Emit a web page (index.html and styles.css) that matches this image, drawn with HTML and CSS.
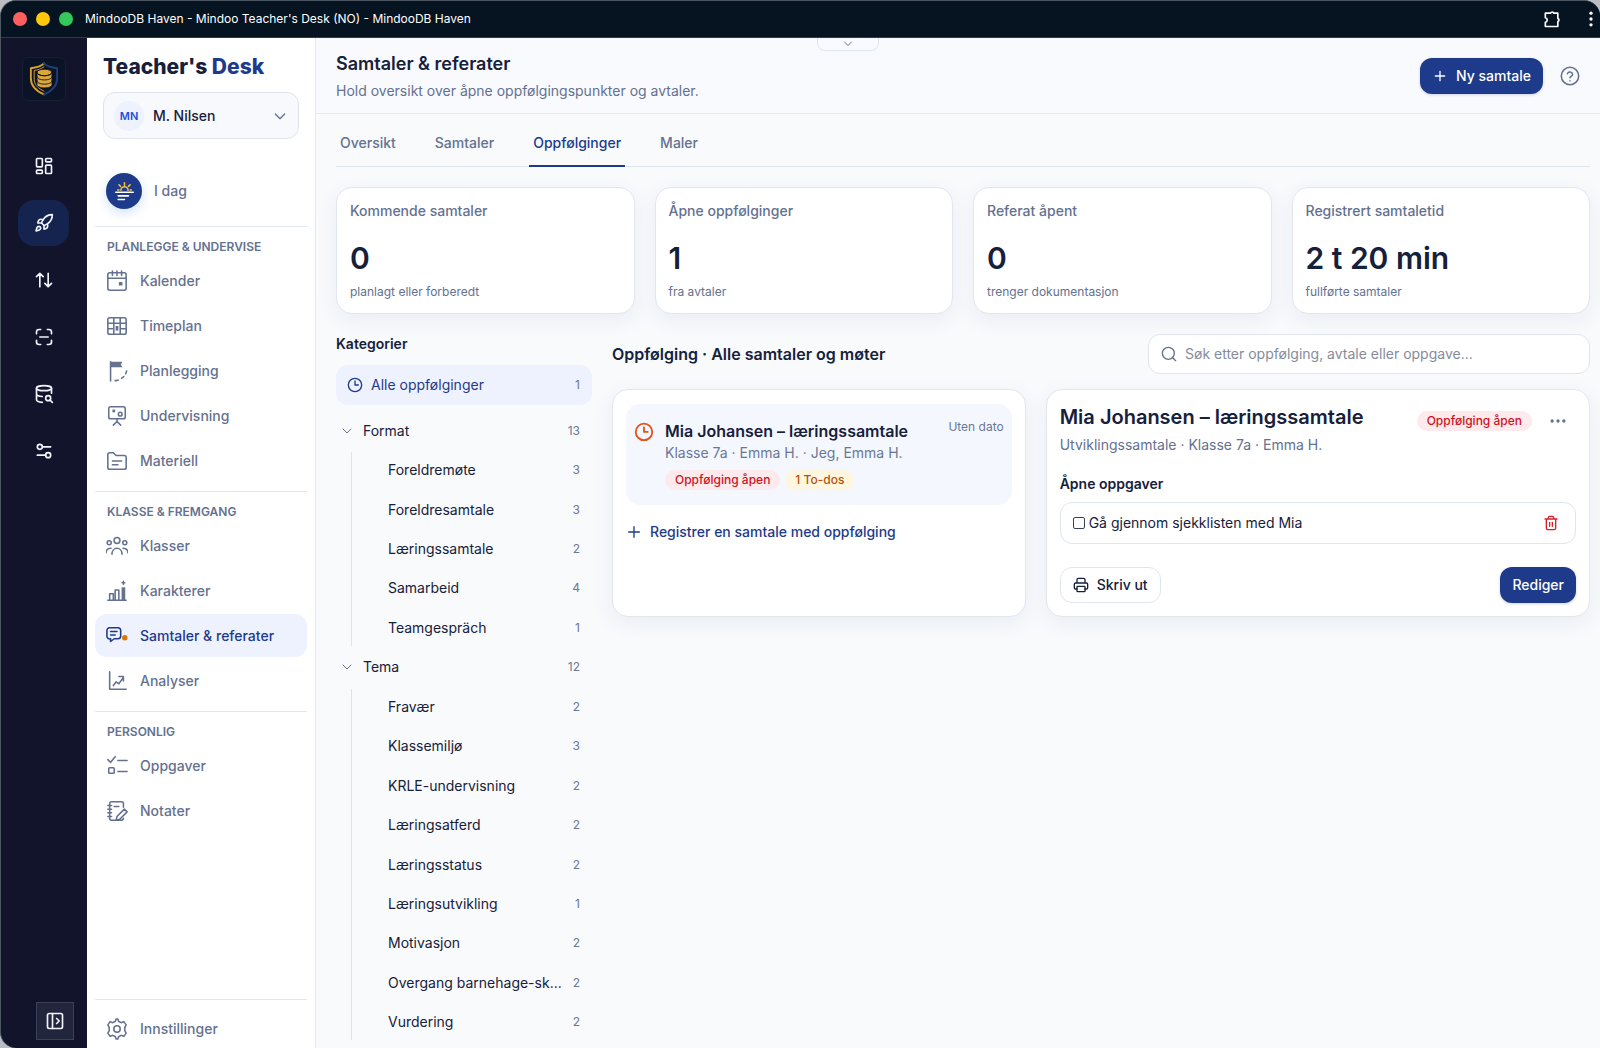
FILE: index.html
```
<!DOCTYPE html>
<html lang="no">
<head>
	<title>Mindoo Teacher's Desk</title>
	<meta charset="utf-8">
	<meta name="viewport" content="width=device-width, initial-scale=1">
	<link rel="stylesheet" href="styles.css">
</head>
<body>
<div class="window">
	<header class="titlebar">
		<span class="light red"></span>
		<span class="light yellow"></span>
		<span class="light green"></span>
		<span class="titlebar-text">MindooDB Haven - Mindoo Teacher's Desk (NO) - MindooDB Haven</span>
		<button class="titlebar-btn" aria-label="Utvidelser">
			<svg class="icon20" viewBox="0 0 24 24"><path d="M4 5h6.500a1.800 1.800 0 0 1 3.500 0h5v6.500a1.800 1.800 0 0 1 0 3.500v6H4v-5a2.800 2.800 0 0 0 0-5.500z"/></svg>
		</button>
		<button class="titlebar-btn" aria-label="Meny">
			<svg class="icon20 solid" viewBox="0 0 24 24"><circle cx="12" cy="5" r="2"/><circle cx="12" cy="12" r="2"/><circle cx="12" cy="19" r="2"/></svg>
		</button>
	</header>

	<div class="app">
		<nav class="rail" aria-label="Apper">
			<div class="rail-logo">
				<svg viewBox="0 0 32 36">
					<path class="gold" d="M16 1.500C12 5 7 6 2 6.500v11C2 26 8 31 16 34.500"/>
					<path class="blue" d="M16 1.500c4 3.500 9 4.500 14 5v11C30 26 24 31 16 34.500"/>
					<path class="gold thin" d="M16 5C12.500 7.500 9 8.500 5.500 9v9c0 6 4 10 10.500 13"/>
					<path class="gold-fill" d="M8.500 11v13c0 2 3.500 3.500 8 3.500s8-1.500 8-3.500V11z"/>
					<ellipse class="gold-fill" cx="16.500" cy="11" rx="8" ry="3.500"/>
					<path class="cut" d="M8.500 11c0 2 3.500 3.500 8 3.500s8-1.500 8-3.500M8.500 15.500c0 2 3.500 3.500 8 3.500s8-1.500 8-3.500M8.500 20c0 2 3.500 3.500 8 3.500s8-1.500 8-3.500"/>
				</svg>
			</div>
			<div class="rail-items">
				<button class="rail-btn" aria-label="Dashbord">
					<svg class="icon20" viewBox="0 0 24 24"><rect x="3" y="3" width="7" height="10" rx="1"/><rect x="3" y="17" width="7" height="4" rx="1"/><rect x="14" y="3" width="7" height="4" rx="1"/><rect x="14" y="11" width="7" height="10" rx="1"/></svg>
				</button>
				<button class="rail-btn active" aria-label="Apper">
					<svg class="icon20" viewBox="0 0 24 24"><path d="M12 15l-3-3a22 22 0 0 1 2-4A13 13 0 0 1 22 2c0 2.700-.8 7.500-6 11a22 22 0 0 1-4 2z"/><path d="M9 12H4.500s.5-3 2-4 4.500 0 4.500 0M12 15v4.500s3-.5 4-2 0-4.500 0-4.500"/><path d="M4.500 16.500c-1.500 1.300-2 5-2 5s3.700-.5 5-2c.7-.8.700-2.100-.1-2.900a2.200 2.200 0 0 0-2.900-.1z"/></svg>
				</button>
				<button class="rail-btn" aria-label="Synkronisering">
					<svg class="icon20" viewBox="0 0 24 24"><path d="M7 20V4M3 8l4-4 4 4M17 4v16M13 16l4 4 4-4"/></svg>
				</button>
				<button class="rail-btn" aria-label="Skann">
					<svg class="icon20" viewBox="0 0 24 24"><path d="M3 8V6a3 3 0 0 1 3-3h2M16 3h2a3 3 0 0 1 3 3v2M21 16v2a3 3 0 0 1-3 3h-2M8 21H6a3 3 0 0 1-3-3v-2M7 12h10"/></svg>
				</button>
				<button class="rail-btn" aria-label="Databasesøk">
					<svg class="icon20" viewBox="0 0 24 24"><ellipse cx="12" cy="5" rx="9" ry="3"/><path d="M3 5v14c0 1.500 3 2.800 7 3M21 5v6M3 12c0 1.500 3 2.700 7 3"/><circle cx="17" cy="17" r="3"/><path d="M22 22l-2.800-2.800"/></svg>
				</button>
				<button class="rail-btn" aria-label="Justeringer">
					<svg class="icon20" viewBox="0 0 24 24"><circle cx="7" cy="7" r="3"/><path d="M10 7h10"/><circle cx="17" cy="17" r="3"/><path d="M14 17H4"/></svg>
				</button>
			</div>
			<button class="rail-toggle" aria-label="Vis sidepanel">
				<svg class="icon20" viewBox="0 0 24 24"><rect x="3" y="3" width="18" height="18" rx="2"/><path d="M9 3v18M14 9l3 3-3 3"/></svg>
			</button>
		</nav>

		<aside class="sidebar">
			<div class="brand">Teacher's <span>Desk</span></div>
			<div class="user">
				<label class="avatar" for="user">MN</label>
				<select id="user"><option>M. Nilsen</option></select>
				<svg class="icon16 user-chevron" viewBox="0 0 24 24"><path d="M5 9l7 7 7-7"/></svg>
			</div>
			<a class="today" href="#">
				<span class="today-icon">
					<svg viewBox="0 0 24 24"><path class="sun" d="M7.500 10.500a4.500 4.500 0 0 1 9 0M12 4V1M7 5.500L5 3.500M17 5.500l2-2M5 10H3.500M19 10h1.500"/><path d="M1 13h22M4 17.500h13M4 22h8"/></svg>
				</span>
				I dag
			</a>

			<div class="nav-group">
				<h2>PLANLEGGE &amp; UNDERVISE</h2>
				<a href="#"><svg class="icon22" viewBox="0 0 24 24"><rect x="2" y="3" width="20" height="19" rx="2"/><path d="M2 9h20M7 1v5M12 1v5M17 1v5"/><rect class="dot" x="14" y="13" width="4" height="4" rx="1"/></svg>Kalender</a>
				<a href="#"><svg class="icon22" viewBox="0 0 24 24"><rect x="2" y="3" width="20" height="18" rx="2"/><path d="M2 9h20M8.500 3v18M15.500 3v18M2 15h6.500M15.500 15H22"/><rect class="dot" x="10.500" y="12" width="3" height="5"/></svg>Timeplan</a>
				<a href="#"><svg class="icon22" viewBox="0 0 24 24"><path d="M5 2v21"/><path class="dot" d="M5 2h13l-2 3 2 3H5z"/><path d="M22.500 12l-1 3M19.500 18l-2.500 2M13.500 22l-3.500.5"/></svg>Planlegging</a>
				<a href="#"><svg class="icon22" viewBox="0 0 24 24"><rect x="3" y="2" width="18" height="13" rx="2"/><path d="M12 15v3M8 22l4-4 4 4"/><circle cx="15.500" cy="10" r="2"/><rect class="dot" x="7" y="5" width="3" height="3"/></svg>Undervisning</a>
				<a href="#"><svg class="icon22" viewBox="0 0 24 24"><path d="M4 3h4l3 3h9a2 2 0 0 1 2 2v11a2 2 0 0 1-2 2H4a2 2 0 0 1-2-2V5a2 2 0 0 1 2-2zM7 12h10M7 16h6"/></svg>Materiell</a>
			</div>
			<div class="nav-group">
				<h2>KLASSE &amp; FREMGANG</h2>
				<a href="#"><svg class="icon22" viewBox="0 0 24 24"><circle cx="12" cy="6" r="3.200"/><circle cx="3.500" cy="8.500" r="2.200"/><circle cx="20.500" cy="8.500" r="2.200"/><path d="M6.500 21c0-4 2.500-6.500 5.500-6.500s5.500 2.500 5.500 6.500M0 19.500c0-3 2-5 5.500-5M24 19.500c0-3-2-5-5.500-5"/></svg>Klasser</a>
				<a href="#"><svg class="icon22" viewBox="0 0 24 24"><path d="M2 22h20M4 22v-7h4v7M10 22V11h4v11"/><path class="dot" d="M17 8h4v14h-4z"/><path d="M19 1.500v3M17.500 3h3"/></svg>Karakterer</a>
				<a class="active" href="#"><svg class="icon22" viewBox="0 0 24 24"><path d="M4 3h9a3 3 0 0 1 3 3v6a3 3 0 0 1-3 3H9l-4 3v-3a3 3 0 0 1-4-3V6a3 3 0 0 1 3-3zM5 7h7M5 11h5"/><circle class="orange" cx="20.500" cy="14" r="3"/></svg>Samtaler &amp; referater</a>
				<a href="#"><svg class="icon22" viewBox="0 0 24 24"><path d="M4 2v19h18M8 17l3-4 3 2 5-7M14 7h5v5"/></svg>Analyser</a>
			</div>
			<div class="nav-group">
				<h2>PERSONLIG</h2>
				<a href="#"><svg class="icon22" viewBox="0 0 24 24"><path d="M2 5l3 3 5-6M13 6h10M13 18h10"/><rect x="3" y="14" width="6" height="6" rx="1"/></svg>Oppgaver</a>
				<a href="#"><svg class="icon22" viewBox="0 0 24 24"><path d="M19 8V4a2 2 0 0 0-2-2H6a2 2 0 0 0-2 2v16a2 2 0 0 0 2 2h11a2 2 0 0 0 2-2M2 6h4M2 10h4M2 14h4M2 18h4M9 7h5M20 10l3 3-8 8-4 1 1-4z"/></svg>Notater</a>
			</div>
			<div class="nav-group nav-bottom">
				<a href="#"><svg class="icon22" viewBox="0 0 24 24"><path d="M10.300 3.600 11 1h2l.7 2.600 2.800 1.500L19.500 4l2.500 3.500-1.500 2.700v3.600L22 16.500 19.500 20l-3-1.100-2.800 1.500L13 23h-2l-.7-2.600-2.800-1.500L4.500 20 2 16.500l1.500-2.700v-3.600L2 7.500 4.500 4l3 1.100z"/><circle cx="12" cy="12" r="3.500"/></svg>Innstillinger</a>
			</div>
		</aside>

		<main class="main">
			<button class="pull-tab" aria-label="Vis toppfelt">
				<svg class="icon12" viewBox="0 0 24 24"><path d="M5 8l7 7 7-7"/></svg>
			</button>
			<header class="page-header">
				<div class="page-title">
					<h1>Samtaler &amp; referater</h1>
					<p>Hold oversikt over åpne oppfølgingspunkter og avtaler.</p>
				</div>
				<button class="btn primary">
					<svg class="icon16" viewBox="0 0 24 24"><path d="M12 5v14M5 12h14"/></svg>Ny samtale
				</button>
				<button class="help" aria-label="Hjelp">
					<svg class="icon22" viewBox="0 0 24 24"><circle cx="12" cy="12" r="9.500"/><path d="M9.200 9.500a2.900 2.900 0 0 1 5.600.8c0 1.900-2.800 2.400-2.800 3.700M12 17.200v.1"/></svg>
				</button>
			</header>

			<div class="content">
				<nav class="tabs">
					<a href="#">Oversikt</a>
					<a href="#">Samtaler</a>
					<a class="active" href="#">Oppfølginger</a>
					<a href="#">Maler</a>
				</nav>

				<section class="stats">
					<div class="card stat"><h3>Kommende samtaler</h3><strong>0</strong><p>planlagt eller forberedt</p></div>
					<div class="card stat"><h3>Åpne oppfølginger</h3><strong>1</strong><p>fra avtaler</p></div>
					<div class="card stat"><h3>Referat åpent</h3><strong>0</strong><p>trenger dokumentasjon</p></div>
					<div class="card stat"><h3>Registrert samtaletid</h3><strong>2 t 20 min</strong><p>fullførte samtaler</p></div>
				</section>

				<div class="columns">
					<section class="categories">
						<h2>Kategorier</h2>
						<button class="cat-all">
							<svg class="icon16" viewBox="0 0 24 24"><circle cx="12" cy="12" r="10"/><path d="M12 6v6h5"/></svg>
							<span>Alle oppfølginger</span><small>1</small>
						</button>
						<div class="cat-list">
							<button class="cat-group"><svg class="icon12" viewBox="0 0 24 24"><path d="M4 8l8 8 8-8"/></svg><span>Format</span><small>13</small></button>
							<div class="cat-children format">
								<button><span>Foreldremøte</span><small>3</small></button>
								<button><span>Foreldresamtale</span><small>3</small></button>
								<button><span>Læringssamtale</span><small>2</small></button>
								<button><span>Samarbeid</span><small>4</small></button>
								<button><span>Teamgespräch</span><small>1</small></button>
							</div>
							<button class="cat-group"><svg class="icon12" viewBox="0 0 24 24"><path d="M4 8l8 8 8-8"/></svg><span>Tema</span><small>12</small></button>
							<div class="cat-children tema">
								<button><span>Fravær</span><small>2</small></button>
								<button><span>Klassemiljø</span><small>3</small></button>
								<button><span>KRLE-undervisning</span><small>2</small></button>
								<button><span>Læringsatferd</span><small>2</small></button>
								<button><span>Læringsstatus</span><small>2</small></button>
								<button><span>Læringsutvikling</span><small>1</small></button>
								<button><span>Motivasjon</span><small>2</small></button>
								<button><span>Overgang barnehage-sk...</span><small>2</small></button>
								<button><span>Vurdering</span><small>2</small></button>
							</div>
						</div>
					</section>

					<section class="followups">
						<div class="list-header">
							<h2>Oppfølging · Alle samtaler og møter</h2>
							<div class="search">
								<svg class="icon16" viewBox="0 0 24 24"><circle cx="11" cy="11" r="9"/><path d="M22 22l-4.500-4.500"/></svg>
								<input type="text" aria-label="Søk" placeholder="Søk etter oppfølging, avtale eller oppgave...">
							</div>
						</div>

						<div class="panels">
							<div class="card list-card">
								<article class="entry">
									<svg class="icon22" viewBox="0 0 24 24"><circle cx="12" cy="13" r="9"/><path d="M12 8v5h4"/></svg>
									<div class="entry-body">
										<h3>Mia Johansen – læringssamtale</h3>
										<p>Klasse 7a · Emma H. · Jeg, Emma H.</p>
										<div class="badges">
											<span class="badge red-badge">Oppfølging åpen</span>
											<span class="badge amber-badge">1 To-dos</span>
										</div>
									</div>
									<time>Uten dato</time>
								</article>
								<button class="add-link">
									<svg class="icon16" viewBox="0 0 24 24"><path d="M12 4v16M4 12h16"/></svg>Registrer en samtale med oppfølging
								</button>
							</div>

							<div class="card detail">
								<div class="detail-header">
									<div class="detail-title">
										<h2>Mia Johansen – læringssamtale</h2>
										<p>Utviklingssamtale · Klasse 7a · Emma H.</p>
									</div>
									<span class="badge red-badge">Oppfølging åpen</span>
									<button class="more" aria-label="Flere valg">
										<svg class="icon20 solid" viewBox="0 0 24 24"><circle cx="5" cy="12" r="2"/><circle cx="12" cy="12" r="2"/><circle cx="19" cy="12" r="2"/></svg>
									</button>
								</div>
								<h3>Åpne oppgaver</h3>
								<div class="task">
									<input type="checkbox" id="task1">
									<label for="task1">Gå gjennom sjekklisten med Mia</label>
									<button class="delete" aria-label="Slett oppgave">
										<svg class="icon16" viewBox="0 0 24 24"><path d="M3 6h18M5 6v14a2 2 0 0 0 2 2h10a2 2 0 0 0 2-2V6M8 6V4a2 2 0 0 1 2-2h4a2 2 0 0 1 2 2v2M10 11v6M14 11v6"/></svg>
									</button>
								</div>
								<div class="detail-actions">
									<button class="btn outline">
										<svg class="icon16" viewBox="0 0 24 24"><path d="M6 9V4a2 2 0 0 1 2-2h8a2 2 0 0 1 2 2v5M6 18H4a2 2 0 0 1-2-2v-5a2 2 0 0 1 2-2h16a2 2 0 0 1 2 2v5a2 2 0 0 1-2 2h-2"/><rect x="6" y="14" width="12" height="8" rx="1"/></svg>Skriv ut
									</button>
									<button class="btn primary">Rediger</button>
								</div>
							</div>
						</div>
					</section>
				</div>
			</div>
		</main>
	</div>
</div>
</body>
</html>
```
FILE: styles.css
```
* {
	box-sizing: border-box;
}
body {
	margin: 0;
	font-family: Inter, "Liberation Sans", sans-serif;
	font-size: 14px;
	line-height: 20px;
	color: #17203a;
	background: #b9bdc2;
}
h1, h2, h3, p {
	margin: 0;
}
button {
	font: inherit;
	color: inherit;
	background: none;
	border: 0;
	padding: 0;
	cursor: pointer;
}
a {
	color: inherit;
	text-decoration: none;
}
small {
	font-size: 12px;
	color: #6b7894;
}
svg {
	display: block;
	flex: none;
	fill: none;
	stroke: currentColor;
	stroke-width: 2;
	stroke-linecap: round;
	stroke-linejoin: round;
}
.solid {
	fill: currentColor;
	stroke: none;
}
.icon12 { width: 12px; height: 12px; }
.icon16 { width: 16px; height: 16px; }
.icon20 { width: 20px; height: 20px; }
.icon22 { width: 22px; height: 22px; }

.window {
	min-height: 100vh;
	display: flex;
	flex-direction: column;
	border-top: 1px solid #4c5562;
	border-left: 1px solid #4c5562;
	border-radius: 16px 16px 0 16px;
	overflow: hidden;
	background: #11142b;
}

/* title bar */
.titlebar {
	height: 37px;
	display: flex;
	align-items: center;
	gap: 9px;
	padding: 0 0 1px 12px;
	background: #061321;
	border-bottom: 1px solid #30394a;
	color: #fff;
	font-size: 12px;
	font-weight: 400;
}
.light {
	width: 14px;
	height: 14px;
	border-radius: 50%;
}
.red { background: #ff5f5f; }
.yellow { background: #fdc70c; }
.green { background: #34c759; }
.titlebar-text {
	flex: 1;
	margin-left: 3px;
}
.titlebar-btn {
	margin-right: 10px;
}
.titlebar-btn:last-child {
	margin-right: -1px;
}

.app {
	flex: 1;
	display: flex;
}

/* left rail */
.rail {
	width: 86px;
	flex: none;
	display: flex;
	flex-direction: column;
	align-items: center;
	padding: 19px 1px 8px 0;
	color: #f1f4fb;
}
.rail-logo {
	width: 44px;
	height: 44px;
	display: flex;
	align-items: center;
	justify-content: center;
	background: #0b1426;
	border: 1px solid #171d33;
	border-radius: 6px;
}
.rail-logo svg {
	width: 30px;
	height: 34px;
}
.gold { stroke: #d9a02c; }
.thin { stroke-width: 1; }
.blue { stroke: #1f3f7c; }
.gold-fill {
	fill: #dba73a;
	stroke: #0b1426;
	stroke-width: 1;
}
.cut {
	stroke: #0b1426;
	stroke-width: 1;
}
.rail-items {
	flex: 1;
	display: flex;
	flex-direction: column;
	gap: 11px;
	margin-top: 42px;
}
.rail-btn {
	width: 51px;
	height: 46px;
	display: flex;
	align-items: center;
	justify-content: center;
	border-radius: 16px;
}
.rail-btn.active {
	background: #14244f;
}
.rail-toggle {
	width: 38px;
	height: 38px;
	display: flex;
	align-items: center;
	justify-content: center;
	align-self: flex-end;
	margin-right: 12px;
	background: #22263c;
	border: 1px solid #3c4056;
}

/* sidebar */
.sidebar {
	width: 229px;
	flex: none;
	display: flex;
	flex-direction: column;
	padding: 14px 8px 0;
	background: #fff;
	border-right: 1px solid #e2e7f0;
	color: #64718f;
	font-weight: 500;
}
.brand {
	padding-left: 8px;
	font-size: 21px;
	line-height: 30px;
	font-weight: 800;
	color: #17203a;
}
.brand span {
	color: #1e3a8a;
}
.user {
	height: 47px;
	display: flex;
	align-items: center;
	margin: 10px 8px 0 8px;
	padding: 0 10px;
	background: #f8f9fc;
	border: 1px solid #dfe4ec;
	border-radius: 12px;
	color: #17203a;
}
.avatar {
	width: 30px;
	height: 30px;
	flex: none;
	border-radius: 50%;
	background: #eef1fe;
	color: #1d4ed8;
	font-size: 11px;
	line-height: 30px;
	font-weight: 600;
	text-align: center;
}
.user select {
	flex: 1;
	min-width: 0;
	padding: 0 0 0 9px;
	appearance: none;
	border: 0;
	background: none;
	font: inherit;
	color: inherit;
}
.user-chevron {
	color: #64718f;
}
.today {
	display: flex;
	align-items: center;
	gap: 12px;
	margin: 34px 0 17px 11px;
}
.today-icon {
	width: 36px;
	height: 36px;
	display: flex;
	align-items: center;
	justify-content: center;
	border-radius: 50%;
	background: #1e3a8a;
	color: #fff;
	box-shadow: 0 4px 12px #cfe2f5;
}
.today-icon svg {
	width: 19px;
	height: 19px;
}
.sun {
	stroke: #f2c14a;
}
.nav-group {
	display: flex;
	flex-direction: column;
	gap: 2px;
	padding: 10px 0 9px;
	border-top: 1px solid #e2e7ee;
}
.nav-group h2 {
	padding-left: 12px;
	font-size: 12px;
	line-height: 20px;
	font-weight: 600;
}
.nav-group a {
	height: 43px;
	display: flex;
	align-items: center;
	gap: 12px;
	padding-left: 11px;
	border-radius: 12px;
}
.nav-group svg {
	stroke-width: 1.7;
}
.nav-group a.active {
	background: #eef2fe;
	color: #1e3a8a;
}
.nav-group .dot {
	fill: currentColor;
	stroke: none;
}
.nav-group .orange {
	fill: #d97706;
	stroke: none;
}
.nav-group.nav-bottom {
	margin-top: auto;
	padding: 9px 0 0;
}
.nav-group.nav-bottom a {
	height: 39px;
}

/* main area */
.main {
	flex: 1;
	min-width: 0;
	position: relative;
	display: flex;
	flex-direction: column;
	background: #f8fafc;
}
.pull-tab {
	position: absolute;
	top: 0;
	left: 39%;
	width: 62px;
	height: 13px;
	display: flex;
	align-items: center;
	justify-content: center;
	border: 1px solid #e0e6ee;
	border-top: 0;
	border-radius: 0 0 8px 8px;
	color: #64718f;
}
.page-header {
	display: flex;
	align-items: center;
	padding: 12px 19px 12px 20px;
	background: #f9fafe;
	border-bottom: 1px solid #e6eaf1;
}
.page-title {
	flex: 1;
}
.page-title h1 {
	font-size: 18px;
	line-height: 28px;
	font-weight: 600;
}
.page-title p {
	margin-top: 3px;
	color: #64718f;
}
.btn {
	height: 36px;
	display: flex;
	align-items: center;
	gap: 8px;
	padding: 0 12px;
	border-radius: 12px;
	font-weight: 500;
}
.primary {
	background: #1e3a8a;
	color: #fff;
	box-shadow: 0 1px 3px #ccd3e4;
}
.outline {
	border: 1px solid #e0e5ed;
	background: #fff;
}
.help {
	margin-left: 16px;
	color: #64718f;
}
.help svg {
	stroke-width: 1.7;
}
.content {
	flex: 1;
	display: flex;
	flex-direction: column;
	padding: 8px 10px 8px 20px;
}
.tabs {
	display: flex;
	gap: 31px;
	border-bottom: 1px solid #dfe5ec;
	font-weight: 500;
	color: #64718f;
}
.tabs a {
	padding: 11px 4px 12px;
	margin-bottom: -1px;
	border-bottom: 2px solid transparent;
}
.tabs .active {
	color: #1e3a8a;
	border-color: #1e3a8a;
}
.card {
	background: #fff;
	border: 1px solid #e2e6ef;
	border-radius: 16px;
	box-shadow: 0 6px 20px #e9ecf3;
}
.stats {
	display: grid;
	grid-template-columns: repeat(4, 1fr);
	gap: 20px;
	margin-top: 20px;
}
.stat {
	padding: 13px 13px 15px;
}
.stat h3 {
	font-weight: 500;
	font-size: 14px;
	color: #64718f;
}
.stat strong {
	display: block;
	margin: 19px 0 10px;
	font-size: 30px;
	line-height: 36px;
	font-weight: 600;
}
.stat p {
	font-size: 12px;
	line-height: 12px;
	color: #64718f;
}

.columns {
	flex: 1;
	display: flex;
	gap: 20px;
	margin-top: 20px;
}
.categories {
	width: 256px;
	flex: none;
	display: flex;
	flex-direction: column;
}
.categories h2 {
	margin-bottom: 11px;
	font-size: 14px;
	line-height: 20px;
	font-weight: 600;
}
.categories button {
	display: flex;
	align-items: center;
	padding-right: 12px;
	text-align: left;
}
.categories span {
	flex: 1;
	min-width: 0;
	overflow: hidden;
	text-overflow: ellipsis;
	white-space: nowrap;
}
.cat-all {
	height: 40px;
	gap: 8px;
	margin-bottom: 8px;
	border-radius: 12px;
	background: #eef2fe;
	color: #1e3a8a;
}
.cat-all svg {
	margin-left: 11px;
}
/* every row shares the remaining height */
.cat-list {
	flex: 1;
	display: grid;
	grid-template-columns: minmax(0, 1fr);
	grid-auto-rows: 1fr;
	row-gap: 4px;
}
.cat-group {
	gap: 10px;
}
.cat-group svg {
	margin-left: 5px;
	color: #64718f;
}
.cat-children {
	display: grid;
	grid-template-columns: minmax(0, 1fr);
	grid-template-rows: subgrid;
	margin-left: 15px;
	padding-left: 36px;
	border-left: 1px solid #dfe4ec;
}
.cat-children button {
	gap: 8px;
}
.format { grid-row: span 5; }
.tema { grid-row: span 9; }

.followups {
	flex: 1;
	min-width: 0;
}
.list-header {
	display: flex;
	align-items: center;
	justify-content: space-between;
}
.list-header h2 {
	font-size: 16px;
	font-weight: 600;
}
.search {
	width: 442px;
	height: 40px;
	display: flex;
	align-items: center;
	gap: 8px;
	padding: 0 12px;
	background: #fff;
	border: 1px solid #e0e5ed;
	border-radius: 12px;
	color: #64718f;
}
.search input {
	flex: 1;
	border: 0;
	padding: 0;
	outline: 0;
	background: none;
	font: inherit;
	color: #17203a;
}
.search input::placeholder {
	color: #858c9c;
}
.panels {
	display: grid;
	grid-template-columns: 19fr 25fr;
	gap: 20px;
	margin-top: 15px;
}
.list-card {
	padding: 14px 13px;
}
.entry {
	display: flex;
	padding: 16px 8px 15px 7px;
	background: #f5f7ff;
	border-radius: 14px;
}
.entry svg {
	color: #e2541b;
}
.entry-body {
	flex: 1;
	margin-left: 10px;
}
.entry h3 {
	font-size: 16px;
	line-height: 22px;
	font-weight: 600;
}
.entry p {
	line-height: 22px;
	color: #6b7894;
}
.entry time {
	font-size: 12px;
	line-height: 14px;
	color: #6b7894;
}
.badges {
	display: flex;
	gap: 5px;
	margin-top: 6px;
}
.badge {
	padding: 0 10px;
	border-radius: 10px;
	font-size: 12px;
	line-height: 20px;
	font-weight: 500;
}
.red-badge {
	background: #fdeaec;
	color: #d11124;
}
.amber-badge {
	background: #fff6e0;
	color: #b45309;
}
.add-link {
	display: flex;
	align-items: center;
	gap: 8px;
	margin-top: 17px;
	color: #1e3a8a;
	font-weight: 500;
}
.detail {
	padding: 13px;
}
.detail-header {
	display: flex;
}
.detail-title {
	flex: 1;
}
.detail-title h2 {
	font-size: 20px;
	line-height: 28px;
	font-weight: 600;
}
.detail-title p {
	margin-top: 4px;
	color: #64718f;
}
.detail-header .badge {
	align-self: flex-start;
	margin-top: 8px;
}
.more {
	align-self: flex-start;
	margin: 8px 8px 0 16px;
	color: #64718f;
}
.detail h3 {
	margin: 19px 0 8px;
	font-size: 14px;
	font-weight: 600;
}
.task {
	height: 42px;
	display: flex;
	align-items: center;
	padding: 0 16px 0 12px;
	border: 1px solid #e0e5ed;
	border-radius: 12px;
}
.task input {
	appearance: none;
	width: 12px;
	height: 12px;
	margin: 0;
	border: 1px solid #39425a;
	border-radius: 2px;
}
.task label {
	flex: 1;
	margin-left: 4px;
}
.delete {
	color: #dc1f26;
}
.detail-actions {
	display: flex;
	justify-content: space-between;
	margin-top: 23px;
}
```
